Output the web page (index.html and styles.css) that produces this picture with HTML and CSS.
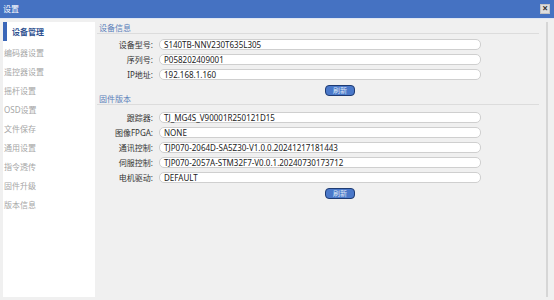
FILE: index.html
```html
<!DOCTYPE html>
<html lang="zh-CN">
<head>
    <meta charset="UTF-8">
    <title>设置</title>
    <link rel="stylesheet" href="styles.css">
</head>
<body>
    <div class="window">
        <div class="titlebar">
            <span class="title">设置</span>
            <span class="close">×</span>
        </div>

        <div class="window-body">
            <nav class="sidebar">
                <div class="nav-item active">设备管理</div>
                <div class="nav-item">编码器设置</div>
                <div class="nav-item">遥控器设置</div>
                <div class="nav-item">摇杆设置</div>
                <div class="nav-item">OSD设置</div>
                <div class="nav-item">文件保存</div>
                <div class="nav-item">通用设置</div>
                <div class="nav-item">指令透传</div>
                <div class="nav-item">固件升级</div>
                <div class="nav-item">版本信息</div>
            </nav>

            <main class="content">
                <div class="section-title">设备信息</div>
                <div class="fields">
                    <label class="field-label">设备型号:</label>
                    <div class="field-input">S140TB-NNV230T635L305</div>
                    <label class="field-label">序列号:</label>
                    <div class="field-input">P058202409001</div>
                    <label class="field-label">IP地址:</label>
                    <div class="field-input">192.168.1.160</div>
                </div>
                <div class="actions">
                    <button class="btn">刷新</button>
                </div>

                <div class="section-title">固件版本</div>
                <div class="fields fields-firmware">
                    <label class="field-label">跟踪器:</label>
                    <div class="field-input">TJ_MG4S_V90001R250121D15</div>
                    <label class="field-label">图像FPGA:</label>
                    <div class="field-input">NONE</div>
                    <label class="field-label">通讯控制:</label>
                    <div class="field-input">TJP070-2064D-SA5Z30-V1.0.0.20241217181443</div>
                    <label class="field-label">伺服控制:</label>
                    <div class="field-input">TJP070-2057A-STM32F7-V0.0.1.20240730173712</div>
                    <label class="field-label">电机驱动:</label>
                    <div class="field-input">DEFAULT</div>
                </div>
                <div class="actions">
                    <button class="btn">刷新</button>
                </div>
            </main>

            <div class="scrollbar"></div>
        </div>
    </div>
</body>
</html>
```

FILE: styles.css
```css
* {
    margin: 0;
    padding: 0;
    box-sizing: border-box;
}

body {
    font-family: 'Noto Sans', 'Noto Sans CJK SC', sans-serif;
    font-size: 8px;
    color: #333;
    background: #f0f0f0;
}

.window {
    width: 554px;
    height: 300px;
    display: flex;
    flex-direction: column;
    background: #f0f0f0;
}

.titlebar {
    height: 19px;
    background: #4572c2;
    border-bottom: 1px solid #dfe6f2;
    display: flex;
    align-items: center;
    justify-content: space-between;
    padding: 0 4px 1px 3px;
    color: #fff;
}

.title {
    font-size: 8px;
    line-height: 1;
}

.close {
    width: 10px;
    height: 10px;
    background: #dedede;
    border: 1px solid #c4c4c4;
    color: #333;
    font-size: 10px;
    line-height: 7px;
    text-align: center;
    font-weight: bold;
}

.window-body {
    flex: 1;
    display: flex;
    padding: 3px;
}

/* 左侧导航 */
.sidebar {
    width: 92px;
    background: #fff;
    padding-top: 2px;
}

.nav-item {
    height: 19px;
    line-height: 19px;
    padding-left: 1px;
    font-size: 8px;
    color: #a6a6a6;
}

.nav-item.active {
    font-weight: bold;
    color: #2d4f8f;
    border-left: 4px solid #3a66b8;
    padding-left: 5px;
    margin-top: -2px;
    margin-bottom: 2px;
}

/* 右侧内容 */
.content {
    width: 442px;
    margin-left: 2px;
    padding-top: 1px;
}

.section-title {
    line-height: 9px;
    padding: 0 0 1px 2px;
    color: #5b7fba;
    border-bottom: 1px solid #dcdcdc;
}

.fields {
    display: grid;
    grid-template-columns: 62px 322px;
    row-gap: 4px;
    margin-top: 5px;
}

.fields-firmware {
    margin-top: 7px;
}

.field-label {
    text-align: right;
    padding-right: 6px;
    line-height: 11px;
    color: #333;
}

.field-input {
    height: 11px;
    line-height: 9px;
    background: #fff;
    border: 1px solid #cfcfcf;
    border-radius: 5px;
    padding-left: 4px;
    color: #222;
    white-space: nowrap;
}

.actions {
    padding-left: 228px;
    margin-top: 4px;
    margin-bottom: -2px;
}

.btn {
    width: 30px;
    height: 11px;
    border: 1px solid #1f3b72;
    border-radius: 4px;
    background: #4a78c9;
    color: #dfe7f5;
    font-family: 'Noto Sans CJK SC', sans-serif;
    font-size: 7px;
    line-height: 9px;
}

.scrollbar {
    width: 2px;
    margin-left: 7px;
    background: #d6d6d6;
}
```
